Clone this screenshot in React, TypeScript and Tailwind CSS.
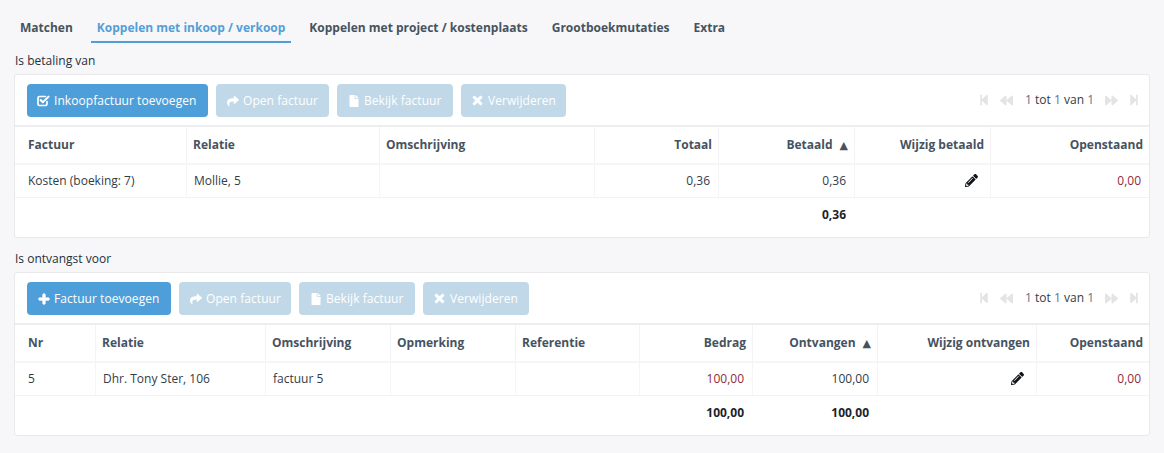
import React from "react";
import { FaShare, FaFile, FaTimes, FaPlus, FaPencilAlt, FaStepBackward, FaStepForward, FaBackward, FaForward } from "react-icons/fa";

type Col = { label: string; right?: boolean; sort?: boolean };

function Btn({ icon, label, on, w }: { icon: React.ReactNode; label: string; on?: boolean; w: string }) {
  return (
    <div className={`${w} h-[33px] rounded-[4px] flex items-center pl-[10px] gap-[4px] text-white text-[12px] tracking-[0.06px] ${on ? "bg-[#4e9fd9]" : "bg-[#c1d8e8]"}`}>
      <span className="w-[13px] flex justify-center shrink-0">{icon}</span>
      <span>{label}</span>
    </div>
  );
}

function CheckIcon() {
  return (
    <svg width="13" height="12" viewBox="0 0 13 12" fill="none" stroke="currentColor" strokeLinecap="round" strokeLinejoin="round">
      <path d="M10 6.5V9a1.5 1.5 0 0 1-1.5 1.5H2.5A1.5 1.5 0 0 1 1 9V3a1.5 1.5 0 0 1 1.5-1.5h6" strokeWidth="1.7" />
      <path d="M3.6 5l2.2 2.2L11.6 1.6" strokeWidth="2" />
    </svg>
  );
}

function Pager() {
  return (
    <div className="mr-[9px] flex items-center text-[12px] text-[#2f3c4a]">
      <FaStepBackward className="text-[#e4e4e4] text-[12px] mr-[10px]" />
      <FaBackward className="text-[#e4e4e4] text-[13px] mr-[12px]" />
      <span><span className="text-[#5f7486]">1</span> tot <span className="text-[#5f7486]">1</span> van <span className="text-[#5f7486]">1</span></span>
      <FaForward className="text-[#e4e4e4] text-[13px] ml-[11px]" />
      <FaStepForward className="text-[#e4e4e4] text-[12px] ml-[10px]" />
    </div>
  );
}

function Panel({ title, buttons, cols, template, row, total }: { title: string; buttons: React.ReactNode; cols: Col[]; template: string; row: React.ReactNode[]; total: React.ReactNode[] }) {
  return (
    <section>
      <div className="h-[18px] leading-[18px] text-[12px] text-[#26303a] pl-[15px]">{title}</div>
      <div className="mt-[4px] mx-[14px] h-[164px] bg-white border border-[#e9e9ec] rounded-[3px] flex flex-col">
        <div className="h-[52px] shrink-0 border-b-2 border-[#eeeef0] pl-[12px] pt-[9px] flex items-start gap-[8px]">
          {buttons}
          <div className="ml-auto self-center -mt-[9px] flex"><Pager /></div>
        </div>
        <div className={`h-[38px] shrink-0 grid ${template} border-b-2 border-[#f6f6f8]`}>
          {cols.map((c, i) => (
            <div key={i} className={`flex items-center text-[12px] font-bold text-[#46535f] ${i ? "border-l border-[#f3f3f5]" : ""} ${c.right ? "justify-end pr-[6px]" : i === 0 ? "pl-[13px]" : "pl-[6px]"}`}>
              {c.label}
              {c.sort && <span className="ml-[7px] text-[11px] leading-none font-normal text-[#46535f] font-['DejaVu_Sans',sans-serif]">▲</span>}
            </div>
          ))}
        </div>
        <div className={`h-[33px] shrink-0 grid ${template} border-b border-[#f3f3f5]`}>
          {row.map((c, i) => (
            <div key={i} className={`flex items-center text-[12px] text-[#323c46] ${i ? "border-l border-[#f5f5f7]" : ""} ${cols[i].right ? "justify-end pr-[8px]" : i === 0 ? "pl-[13px]" : "pl-[7px]"}`}>
              {c}
            </div>
          ))}
        </div>
        <div className={`flex-1 grid ${template} pb-[6px]`}>
          {total.map((c, i) => (
            <div key={i} className={`flex items-center text-[12px] font-bold text-[#1c232b] ${cols[i].right ? "justify-end pr-[8px]" : ""}`}>
              {c}
            </div>
          ))}
        </div>
      </div>
    </section>
  );
}

const red = <span className="text-[#8e2b3c]">0,00</span>;
const pen = <FaPencilAlt className="text-[13px] text-[#11151a] mr-[4px] -mt-[2px]" />;
const share = <FaShare className="text-[12px]" />;
const file = <FaFile className="text-[12px]" />;
const times = <FaTimes className="text-[13px]" strokeWidth={30} />;
const plus = <FaPlus className="text-[12px]" strokeWidth={40} />;

export default function App() {
  return (
    <div className="w-[1164px] h-[453px] overflow-hidden bg-[#f7f7f9] font-['Open_Sans',sans-serif]">
      <nav className="h-[43px] pl-[14px] flex items-start pt-[11px] text-[12px] font-bold text-[#46535f]">
        <div className="px-[6px] h-[32px] leading-[33px]">Matchen</div>
        <div className="ml-[12px] px-[6px] h-[32px] leading-[33px] text-[#549fd6] border-b-2 border-[#4e9fd9]">Koppelen met inkoop / verkoop</div>
        <div className="ml-[12px] px-[6px] h-[32px] leading-[33px]">Koppelen met project / kostenplaats</div>
        <div className="ml-[12px] px-[6px] h-[32px] leading-[33px]">Grootboekmutaties</div>
        <div className="ml-[12px] px-[6px] h-[32px] leading-[33px]">Extra</div>
      </nav>
      <div className="h-[9px]" />
      <Panel
        title="Is betaling van"
        template="grid-cols-[171px_193px_215px_124px_136px_136px_159px]"
        buttons={
          <>
            <Btn on w="w-[181px]" icon={<CheckIcon />} label="Inkoopfactuur toevoegen" />
            <Btn w="w-[113px]" icon={share} label="Open factuur" />
            <Btn w="w-[116px]" icon={file} label="Bekijk factuur" />
            <Btn w="w-[105px]" icon={times} label="Verwijderen" />
          </>
        }
        cols={[
          { label: "Factuur" },
          { label: "Relatie" },
          { label: "Omschrijving" },
          { label: "Totaal", right: true },
          { label: "Betaald", right: true, sort: true },
          { label: "Wijzig betaald", right: true },
          { label: "Openstaand", right: true },
        ]}
        row={["Kosten (boeking: 7)", "Mollie, 5", "", "0,36", "0,36", pen, red]}
        total={["", "", "", "", "0,36", "", ""]}
      />
      <div className="h-[12px]" />
      <Panel
        title="Is ontvangst voor"
        template="grid-cols-[80px_170px_125px_125px_124px_113px_125px_159px_113px]"
        buttons={
          <>
            <Btn on w="w-[144px]" icon={plus} label="Factuur toevoegen" />
            <Btn w="w-[112px]" icon={share} label="Open factuur" />
            <Btn w="w-[116px]" icon={file} label="Bekijk factuur" />
            <Btn w="w-[106px]" icon={times} label="Verwijderen" />
          </>
        }
        cols={[
          { label: "Nr" },
          { label: "Relatie" },
          { label: "Omschrijving" },
          { label: "Opmerking" },
          { label: "Referentie" },
          { label: "Bedrag", right: true },
          { label: "Ontvangen", right: true, sort: true },
          { label: "Wijzig ontvangen", right: true },
          { label: "Openstaand", right: true },
        ]}
        row={["5", "Dhr. Tony Ster, 106", "factuur 5", "", "", <span className="text-[#8e2b3c]">100,00</span>, "100,00", pen, red]}
        total={["", "", "", "", "", "100,00", "100,00", "", ""]}
      />
    </div>
  );
}
